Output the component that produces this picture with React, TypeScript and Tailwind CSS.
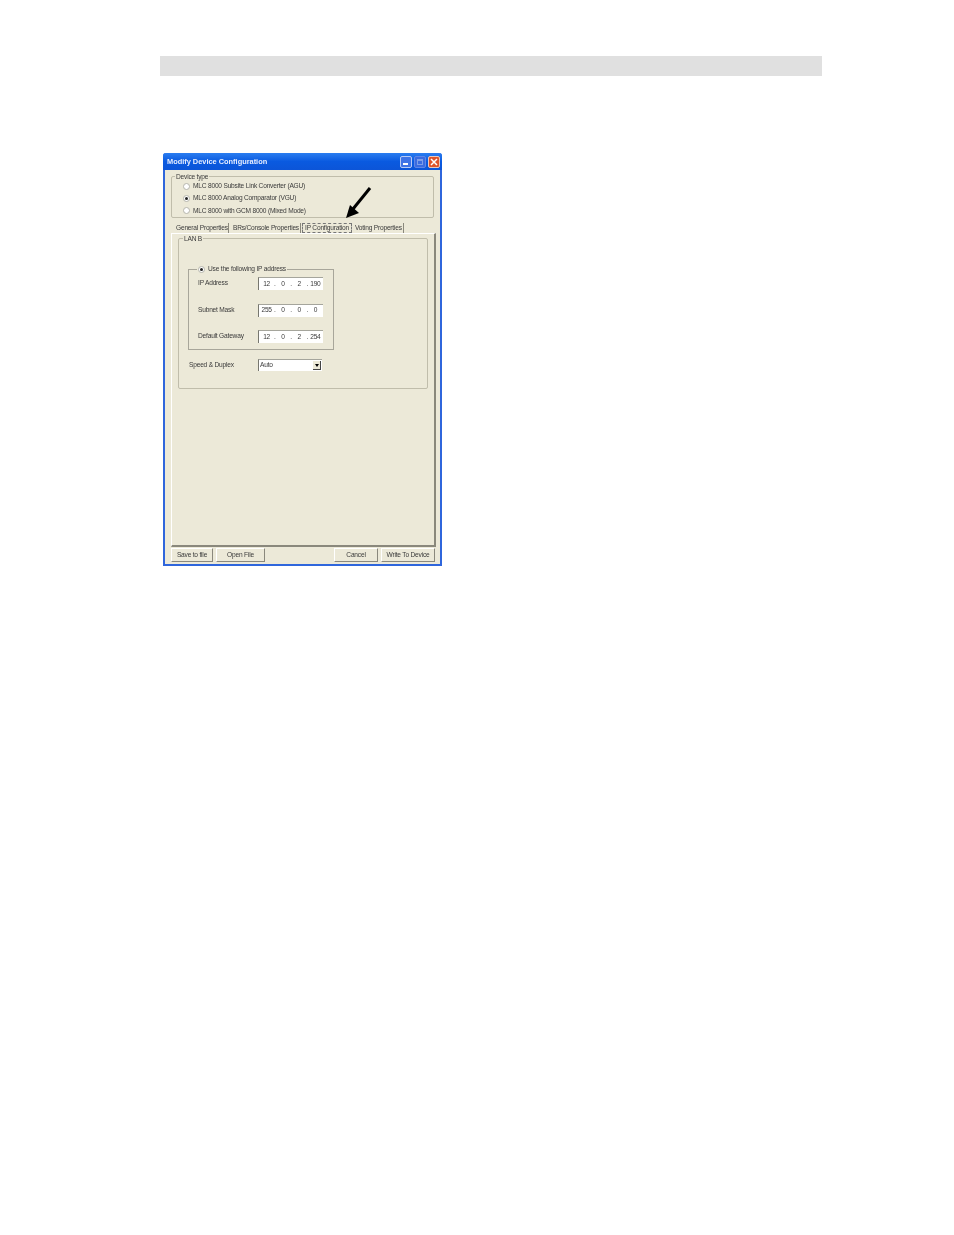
import React from "react";

const F = "font-['Liberation_Sans',sans-serif]";

function Radio({ on }: { on?: boolean }) {
  return (
    <span className="relative flex h-[7px] w-[7px] shrink-0 items-center justify-center rounded-full border-[0.5px] border-[#b5b5ac] bg-white">
      {on && <span className="h-[3px] w-[3px] rounded-full bg-[#222]" />}
    </span>
  );
}

function RadioRow({ label, on }: { label: string; on?: boolean }) {
  return (
    <div className="flex h-[13px] items-center gap-[3px] pl-[11px]">
      <Radio on={on} />
      <span className="whitespace-nowrap">{label}</span>
    </div>
  );
}

function IpInput({ parts }: { parts: string[] }) {
  return (
    <div className="flex h-[13px] w-[65px] items-center border-t border-l border-t-[#a5a59c] border-l-[#77776f] bg-white pl-[2px] pr-[2px]">
      {parts.map((p, i) => (
        <React.Fragment key={i}>
          {i > 0 && <span className="w-[5px] shrink-0 text-center">.</span>}
          <span className="flex-1 text-center">{p}</span>
        </React.Fragment>
      ))}
    </div>
  );
}

function IpRow({ label, parts }: { label: string; parts: string[] }) {
  return (
    <div className="flex items-center">
      <span className="w-[60px] whitespace-nowrap">{label}</span>
      <IpInput parts={parts} />
    </div>
  );
}

function Btn({ label, w }: { label: string; w: string }) {
  return (
    <div className={`flex h-[14px] items-center justify-center border-r border-b border-r-[#8a887c] border-b-[#8a887c] border-t border-l border-t-white border-l-white ${w}`}>
      {label}
    </div>
  );
}

export default function App() {
  return (
    <div className={`h-[1235px] w-[954px] bg-white pt-[56px] ${F} text-[6.6px] leading-none tracking-[-0.2px] text-[#3a3a3a]`}>
      <div className="ml-[160px] h-[20px] w-[662px] bg-[#e0e0e0]" />

      <div className="relative ml-[163px] mt-[77px] flex h-[413px] w-[279px] flex-col rounded-t-[3px] border-x-2 border-b-2 border-[#2f66dc] bg-[#ece9d8] blur-[0.25px]">
        {/* title bar */}
        <div className="-mx-[2px] flex h-[17px] shrink-0 items-center justify-between rounded-t-[3px] bg-gradient-to-b from-[#2a7df0] via-[#0a5ae0] to-[#0c55d8] pl-[4px] pr-[2px] pt-[1px]">
          <span className="whitespace-nowrap text-[7.4px] font-bold tracking-normal text-[#e6edff]">Modify Device Configuration</span>
          <div className="flex items-center gap-[2px]">
            <div className="flex h-[12px] w-[12px] items-end justify-start rounded-[2px] border border-[#b9cbf5] bg-[#3f74e6] pb-[2px] pl-[2px]">
              <span className="h-[2px] w-[5px] bg-white" />
            </div>
            <div className="flex h-[12px] w-[12px] items-center justify-center rounded-[2px] border border-[#5f86e6] bg-[#3a6be0]">
              <span className="h-[6px] w-[6px] border border-[#7f9fe8] border-t-2" />
            </div>
            <div className="flex h-[12px] w-[12px] items-center justify-center rounded-[2px] border border-[#e8c9bd] bg-[#e0552a]">
              <svg width="8" height="8" viewBox="0 0 8 8">
                <path d="M1 1 L7 7 M7 1 L1 7" stroke="#fff" strokeWidth="1.5" />
              </svg>
            </div>
          </div>
        </div>

        {/* device type */}
        <div className="relative ml-[6px] mt-[6px] flex h-[42px] w-[263px] shrink-0 flex-col justify-center rounded-[2px] border border-[#c0bdab] pt-[3px]">
          <span className="absolute -top-[3px] left-[3px] bg-[#ece9d8] px-[1px]">Device type</span>
          <RadioRow label="MLC 8000 Subsite Link Converter (AGU)" />
          <RadioRow label="MLC 8000 Analog Comparator (VGU)" on />
          <RadioRow label="MLC 8000 with GCM 8000 (Mixed Mode)" />
        </div>

        {/* tabs */}
        <div className="ml-[6px] mt-[5px] flex h-[10px] shrink-0 items-center">
          <div className="flex h-[10px] w-[58px] items-center whitespace-nowrap border-r border-[#8a887c] pl-[5px]">General Properties</div>
          <div className="flex h-[10px] w-[72px] items-center whitespace-nowrap border-r border-[#8a887c] pl-[4px]">BRs/Console Properties</div>
          <div className="ml-[1px] flex h-[10px] w-[50px] items-center justify-center whitespace-nowrap border border-dashed border-[#777]">IP Configuration</div>
          <div className="flex h-[10px] w-[52px] items-center whitespace-nowrap border-r border-[#8a887c] pl-[3px]">Voting Properties</div>
        </div>

        {/* panel */}
        <div className="ml-[6px] h-[314px] w-[265px] shrink-0 border-t border-l border-t-white border-l-white border-r-2 border-b-2 border-r-[#8a887c] border-b-[#8a887c] px-[6px] pt-[4px]">
          <div className="relative h-[151px] w-[250px] rounded-[2px] border border-[#c0bdab]">
            <span className="absolute -top-[3px] left-[4px] bg-[#ece9d8] px-[1px]">LAN  B</span>

            <div className="relative ml-[9px] mt-[30px] flex h-[81px] w-[146px] flex-col gap-[13.5px] border border-[#a8a69a] pl-[9px] pt-[7px]">
              <div className="absolute -top-[4px] left-[8px] flex items-center gap-[3px] bg-[#ece9d8] px-[1px]">
                <Radio on />
                <span className="whitespace-nowrap">Use the following IP address</span>
              </div>
              <IpRow label="IP Address" parts={["12", "0", "2", "190"]} />
              <IpRow label="Subnet Mask" parts={["255", "0", "0", "0"]} />
              <IpRow label="Default Gateway" parts={["12", "0", "2", "254"]} />
            </div>

            <div className="ml-[10px] mt-[9px] flex items-center">
              <span className="w-[69px] whitespace-nowrap">Speed &amp; Duplex</span>
              <div className="flex h-[12px] w-[64px] items-center justify-between border-t border-l border-t-[#a5a59c] border-l-[#77776f] bg-white pl-[1px] pr-[1px]">
                <span>Auto</span>
                <div className="flex h-[9px] w-[8px] items-center justify-center border-r border-b border-r-[#444] border-b-[#444] bg-[#ece9d8]">
                  <span className="h-0 w-0 border-x-[2.5px] border-t-[3px] border-x-transparent border-t-black" />
                </div>
              </div>
            </div>
          </div>
        </div>

        {/* buttons */}
        <div className="ml-[6px] mt-[1px] flex w-[264px]">
          <Btn label="Save to file" w="w-[42px]" />
          <Btn label="Open File" w="ml-[3px] w-[49px]" />
          <Btn label="Cancel" w="ml-auto w-[44px]" />
          <Btn label="Write To Device" w="ml-[3px] w-[54px]" />
        </div>

        {/* arrow annotation */}
        <svg className="absolute left-[178px] top-[33px]" width="32" height="36" viewBox="0 0 32 36">
          <path d="M27 2 L10 23" stroke="#000" strokeWidth="3" fill="none" />
          <path d="M3 32 L7 19 L16 27 Z" fill="#000" />
        </svg>
      </div>
    </div>
  );
}
